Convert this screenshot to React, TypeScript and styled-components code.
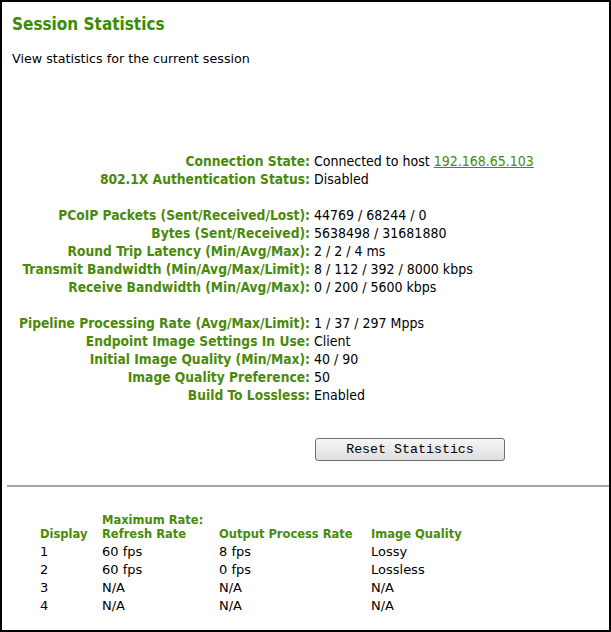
import * as React from 'react';
import styled, { createGlobalStyle } from 'styled-components';

const green = '#4a8a0a';
const titleGreen = '#3a8c00';
const fontTahoma = '"DejaVu Sans Condensed", "DejaVu Sans", sans-serif';
const fontVerdana = '"DejaVu Sans", Verdana, sans-serif';

const GlobalStyle = createGlobalStyle`
    body {
        margin: 0;
        background: #fff;
        font-family: ${fontVerdana};
    }
`;

const Frame = styled.div`
    box-sizing: border-box;
    width: 611px;
    height: 632px;
    border: 2px solid #000;
    background: #fff;
    color: #000;
`;

const Title = styled.h1`
    margin: 12px 0 0 10px;
    font-family: ${fontTahoma};
    font-size: 17px;
    line-height: 20px;
    font-weight: bold;
    color: ${titleGreen};
`;

const Intro = styled.p`
    margin: 17px 0 0 10px;
    font-size: 12.7px;
    line-height: 16px;
`;

const Stats = styled.div`
    margin-top: 85px;
    display: flex;
    flex-direction: column;
    gap: 18px;
`;

const Group = styled.div`
    display: grid;
    grid-template-columns: 308px 1fr;
    column-gap: 4px;
    font-family: ${fontTahoma};
    line-height: 18px;
`;

const Label = styled.div`
    text-align: right;
    font-size: 13.7px;
    font-weight: bold;
    color: ${green};
    white-space: nowrap;
`;

const Value = styled.div`
    font-size: 14px;
    white-space: nowrap;
`;

const HostLink = styled.a`
    color: ${green};
    text-decoration: underline;
`;

const ButtonRow = styled.div`
    margin-top: 34px;
    padding-left: 313px;
`;

const ResetButton = styled.button`
    width: 190px;
    height: 23px;
    border: 1px solid #707070;
    border-radius: 3px;
    background: linear-gradient(#f6f6f6, #dedede);
    font-family: "Liberation Mono", "Courier New", monospace;
    font-size: 13.3px;
    color: #000;
    padding: 0;
`;

const Divider = styled.hr`
    margin: 24px 0 0 5px;
    border: 0;
    border-top: 2px solid #a4a4a4;
`;

const Table = styled.div`
    margin: 26px 0 0 38px;
    display: grid;
    grid-template-columns: 62px 117px 152px auto;
    font-family: ${fontVerdana};
`;

const Head = styled.div`
    align-self: end;
    font-size: 11.5px;
    font-weight: bold;
    color: ${green};
    line-height: 14px;
    padding-bottom: 2px;
`;

const Cell = styled.div`
    font-size: 13px;
    line-height: 18px;
`;

type Row = [string, React.ReactNode];

const groups: Row[][] = [
    [
        [
            'Connection State:',
            <>
                Connected to host <HostLink href="#">192.168.65.103</HostLink>
            </>,
        ],
        ['802.1X Authentication Status:', 'Disabled'],
    ],
    [
        ['PCoIP Packets (Sent/Received/Lost):', '44769 / 68244 / 0'],
        ['Bytes (Sent/Received):', '5638498 / 31681880'],
        ['Round Trip Latency (Min/Avg/Max):', '2 / 2 / 4 ms'],
        ['Transmit Bandwidth (Min/Avg/Max/Limit):', '8 / 112 / 392 / 8000 kbps'],
        ['Receive Bandwidth (Min/Avg/Max):', '0 / 200 / 5600 kbps'],
    ],
    [
        ['Pipeline Processing Rate (Avg/Max/Limit):', '1 / 37 / 297 Mpps'],
        ['Endpoint Image Settings In Use:', 'Client'],
        ['Initial Image Quality (Min/Max):', '40 / 90'],
        ['Image Quality Preference:', '50'],
        ['Build To Lossless:', 'Enabled'],
    ],
];

const displays = [
    ['1', '60 fps', '8 fps', 'Lossy'],
    ['2', '60 fps', '0 fps', 'Lossless'],
    ['3', 'N/A', 'N/A', 'N/A'],
    ['4', 'N/A', 'N/A', 'N/A'],
];

export default function App() {
    return (
        <>
            <GlobalStyle />
            <Frame>
                <Title>Session Statistics</Title>
                <Intro>View statistics for the current session</Intro>
                <Stats>
                    {groups.map((group, gi) => (
                        <Group key={gi}>
                            {group.map(([label, value]) => (
                                <React.Fragment key={label}>
                                    <Label>{label}</Label>
                                    <Value>{value}</Value>
                                </React.Fragment>
                            ))}
                        </Group>
                    ))}
                </Stats>
                <ButtonRow>
                    <ResetButton>Reset Statistics</ResetButton>
                </ButtonRow>
                <Divider />
                <Table>
                    <Head>Display</Head>
                    <Head>
                        Maximum Rate:
                        <br />
                        Refresh Rate
                    </Head>
                    <Head>Output Process Rate</Head>
                    <Head>Image Quality</Head>
                    {displays.map(row =>
                        row.map((cell, ci) => <Cell key={row[0] + ci}>{cell}</Cell>)
                    )}
                </Table>
            </Frame>
        </>
    );
}
